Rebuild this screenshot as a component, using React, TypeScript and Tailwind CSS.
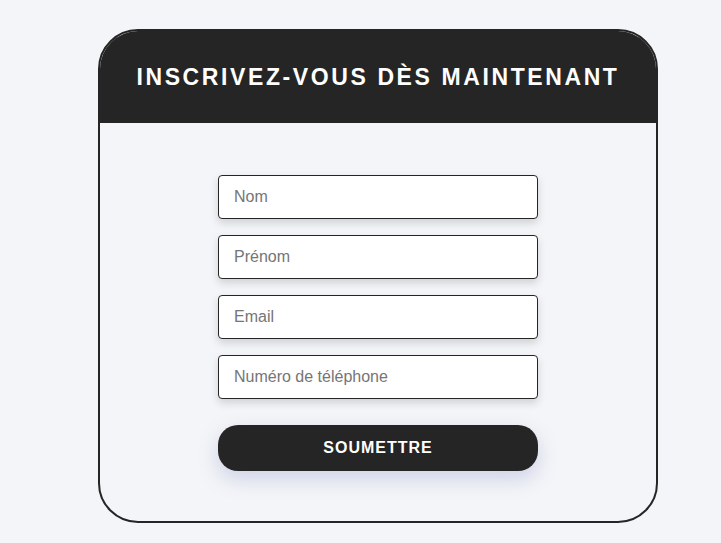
import React from 'react';

const fields = ['Nom', 'Prénom', 'Email', 'Numéro de téléphone'];

export default function App() {
  return (
    <div className="min-h-[543px] bg-[#f4f5f8] pt-[29px] pl-[98px] font-['Liberation_Sans',Arial,sans-serif]">
      <div className="w-[560px] overflow-hidden rounded-[40px] border-2 border-[#252525] bg-[#f4f5f8]">
        <div className="flex h-[92px] items-center justify-center bg-[#252525]">
          <h1 className="text-[23px] font-bold uppercase tracking-[2.6px] text-white">
            Inscrivez-vous dès maintenant
          </h1>
        </div>
        <form className="flex flex-col items-center gap-4 pt-[52px] pb-[50px]">
          {fields.map((f) => (
            <input
              key={f}
              type="text"
              placeholder={f}
              className="h-[44px] w-[320px] rounded-[4px] border border-[#252525] bg-white px-[15px] text-[16px] text-[#333] placeholder-[#757575] shadow-[0_4px_8px_rgba(0,0,0,0.15)] outline-none"
            />
          ))}
          <button
            type="button"
            className="mt-[10px] h-[46px] w-[320px] rounded-[20px] bg-[#252525] text-[16px] font-bold uppercase tracking-[1px] text-white shadow-[0_8px_20px_rgba(120,130,190,0.3)]"
          >
            Soumettre
          </button>
        </form>
      </div>
    </div>
  );
}
